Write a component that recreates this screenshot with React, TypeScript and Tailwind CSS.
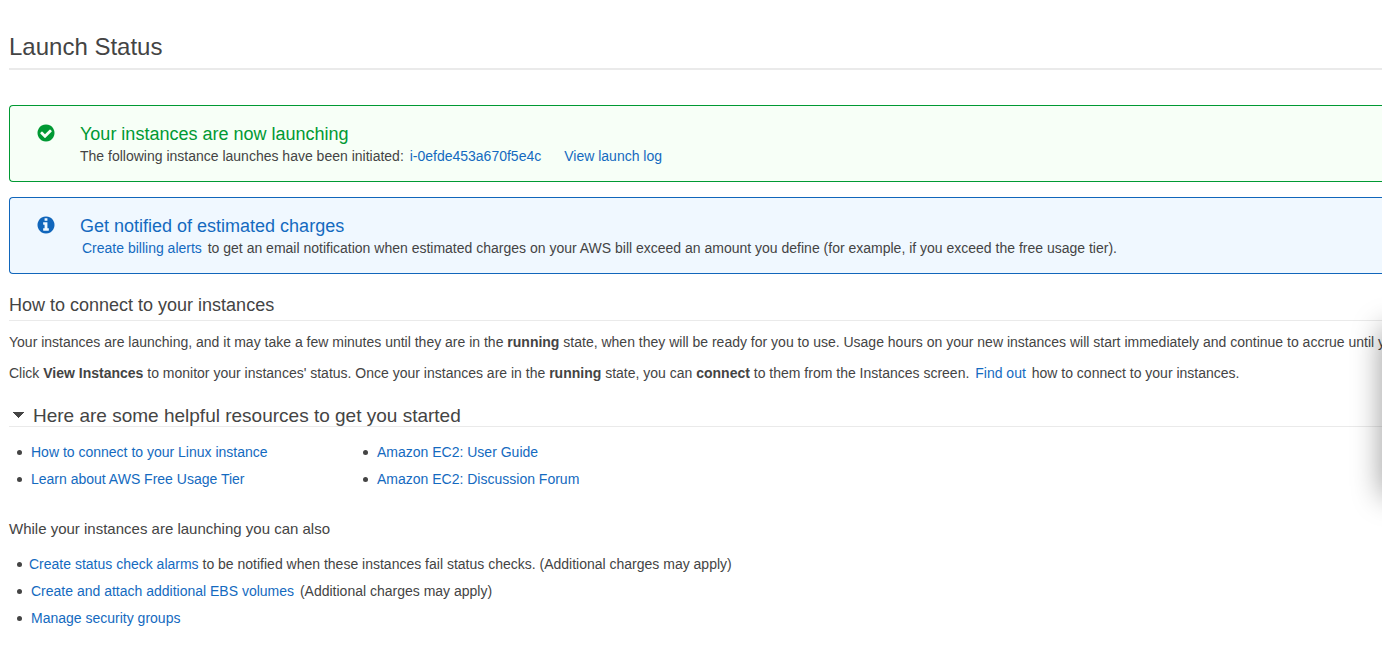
import type { ReactNode } from "react";
import { useState } from "react";

const circlePath =
  "M1664 896q0 209-103 385.500t-279.500 279.500-385.500 103-385.500-103-279.500-279.500-103-385.500 103-385.500 279.500-279.500 385.500-103 385.500 103 279.500 279.500 103 385.500z";
const checkPath =
  "M1412 734q0-28-18-46l-91-90q-19-19-45-19t-45 19l-408 407-226-226q-19-19-45-19t-45 19l-91 90q-18 18-18 46 0 27 18 45l362 362q19 19 45 19 27 0 46-19l543-543q18-18 18-45z";
const infoPath =
  "M1152 1376v-160q0-14-9-23t-23-9h-96v-512q0-14-9-23t-23-9h-320q-14 0-23 9t-9 23v160q0 14 9 23t23 9h96v320h-96q-14 0-23 9t-9 23v160q0 14 9 23t23 9h448q14 0 23-9t9-23zM1024 480v-160q0-14-9-23t-23-9h-192q-14 0-23 9t-9 23v160q0 14 9 23t23 9h192q14 0 23-9t9-23z";

function Link({ children }: { children: ReactNode }) {
  return (
    <a href="#" className="px-0.5 text-[#146ac0] hover:underline">
      {children}
    </a>
  );
}

function Notice({
  tone,
  title,
  children,
}: {
  tone: "success" | "info";
  title: string;
  children: ReactNode;
}) {
  const success = tone === "success";
  return (
    <section
      className={
        success
          ? "flex rounded-l border border-r-0 border-[#009933] bg-[#f7fff7] pt-[17px] pb-3.5 pl-[27px]"
          : "flex rounded-l border border-r-0 border-[#1166bb] bg-[#f0f8ff] pt-[17px] pb-3.5 pl-[27px]"
      }
    >
      <div className="w-[43px] shrink-0 pt-px">
        <svg
          width="18"
          height="18"
          viewBox="85 85 1622 1622"
          aria-hidden="true"
          className={success ? "fill-[#009933]" : "fill-[#1166bb]"}
        >
          <path fillRule="evenodd" d={circlePath + (success ? checkPath : infoPath)} />
        </svg>
      </div>
      <div className="leading-[22px]">
        <h2 className={success ? "text-lg leading-[22px] text-[#009933]" : "text-lg leading-[22px] text-[#146ac0]"}>
          {title}
        </h2>
        <p>{children}</p>
      </div>
    </section>
  );
}

function BulletList({ children }: { children: ReactNode }) {
  return <ul className="pl-2 leading-[27px]">{children}</ul>;
}

function Item({ children }: { children: ReactNode }) {
  return (
    <li className="flex items-center gap-[7px] before:size-[5px] before:shrink-0 before:rounded-full before:bg-[#444444]">
      <span>{children}</span>
    </li>
  );
}

export default function App() {
  const [open, setOpen] = useState(true);
  return (
    <main className="relative min-h-screen overflow-hidden bg-white pt-8 pb-6 pl-[9px] font-['Liberation_Sans',Arial,sans-serif] text-sm leading-5 text-[#444444]">
      <h1 className="border-b-2 border-[#eaeaea] pb-1.5 text-2xl leading-[30px]">Launch Status</h1>

      <div className="mt-[35px] flex flex-col gap-[15px]">
        <Notice tone="success" title="Your instances are now launching">
          The following instance launches have been initiated: <Link>i-0efde453a670f5e4c</Link>
          <span className="ml-[19px]">
            <Link>View launch log</Link>
          </span>
        </Notice>
        <Notice tone="info" title="Get notified of estimated charges">
          <Link>Create billing alerts</Link> to get an email notification when estimated charges on your AWS bill
          exceed an amount you define (for example, if you exceed the free usage tier).
        </Notice>
      </div>

      <h2 className="mt-[19px] border-b border-[#eaeaea] pb-[3px] text-lg leading-6">
        How to connect to your instances
      </h2>
      <p className="mt-[11px] whitespace-nowrap">
        Your instances are launching, and it may take a few minutes until they are in the <b>running</b> state, when
        they will be ready for you to use. Usage hours on your new instances will start immediately and continue to
        accrue until you
      </p>
      <p className="mt-[11px]">
        Click <b>View Instances</b> to monitor your instances' status. Once your instances are in the <b>running</b>{" "}
        state, you can <b>connect</b> to them from the Instances screen. <Link>Find out</Link> how to connect to your
        instances.
      </p>

      <h2 className="mt-[23px] border-b border-[#eaeaea] text-[19px] leading-5">
        <button
          type="button"
          aria-expanded={open}
          onClick={() => setOpen(!open)}
          className="flex cursor-pointer items-center gap-[9px] pl-1"
        >
          <svg width="11" height="8" viewBox="0 0 11 8" aria-hidden="true" className={open ? "" : "-rotate-90"}>
            <path d="M0 0h11v1h-1v1h-1v1h-1v1h-1v1h-1v1h-1v-1h-1v-1h-1v-1h-1v-1h-1v-1h-1z" fill="#444444" />
          </svg>
          Here are some helpful resources to get you started
        </button>
      </h2>
      {open && (
        <div className="mt-3 flex">
          <div className="w-[346px] shrink-0">
            <BulletList>
              <Item><Link>How to connect to your Linux instance</Link></Item>
              <Item><Link>Learn about AWS Free Usage Tier</Link></Item>
            </BulletList>
          </div>
          <BulletList>
            <Item><Link>Amazon EC2: User Guide</Link></Item>
            <Item><Link>Amazon EC2: Discussion Forum</Link></Item>
          </BulletList>
        </div>
      )}

      <h3 className="mt-[26px] mb-3 text-[15px]">While your instances are launching you can also</h3>
      <BulletList>
        <Item>
          <a href="#" className="text-[#146ac0] hover:underline">Create status check alarms</a> to be notified when
          these instances fail status checks. (Additional charges may apply)
        </Item>
        <Item>
          <Link>Create and attach additional EBS volumes</Link> (Additional charges may apply)
        </Item>
        <Item><Link>Manage security groups</Link></Item>
      </BulletList>

      <aside className="absolute top-[328px] left-full h-[168px] w-10 bg-white shadow-[0_0_30px_rgba(0,0,0,0.4)]" />
    </main>
  );
}
